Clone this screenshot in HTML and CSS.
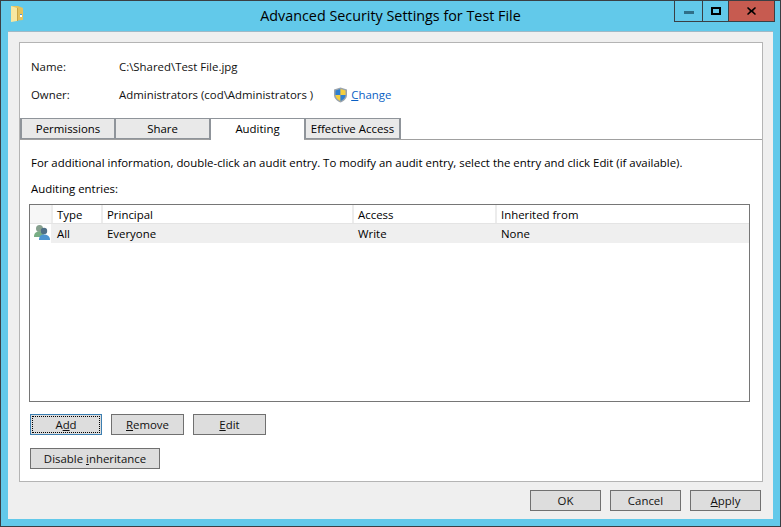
FILE: index.html
```html
<!DOCTYPE html>
<html lang="en">
<head>
<meta charset="utf-8">
<title>Advanced Security Settings for Test File</title>
<link rel="stylesheet" href="styles.css">
</head>
<body>
<div class="window">
  <header class="titlebar">
    <svg class="folder" width="14" height="18" viewBox="0 0 14 18"><path d="M1 1h7l5 2v12l-12 1z" fill="#e6c35c"/><path d="M1 1l6 2v13l-6 1z" fill="#f7e7a0"/><path d="M7 3h1v13H7z" fill="#c9a544"/><path d="M8 4h4v11H8z" fill="#e3c25e"/><rect x="10" y="9" width="2" height="1" fill="#4d9ad6"/><rect x="10" y="10" width="2" height="2" fill="#fff"/></svg>
    <h1 class="title">Advanced Security Settings for Test File</h1>
    <div class="controls">
      <div class="ctl ctl-min"><span class="min-bar"></span></div>
      <div class="ctl ctl-max"><span class="max-box"></span></div>
      <div class="ctl ctl-close"><svg width="9" height="8" viewBox="0 0 9 8"><path d="M1 0l3.500 3L8 0l1 1-3 3 3 3-1 1-3.500-3L1 8 0 7l3-3-3-3z" fill="#000"/></svg></div>
    </div>
  </header>
  <div class="client">
    <main class="panel">
      <div class="info">
        <div class="info-row"><span class="info-label">Name:</span><span>C:\Shared\Test File.jpg</span></div>
        <div class="info-row"><span class="info-label">Owner:</span><span>Administrators (cod\Administrators )</span>
          <svg class="shield" width="15" height="16" viewBox="0 0 15 16"><path d="M7.500 0.500L14 2.500V8c0 3.500-3 6-6.500 7.500C4 14 1 11.500 1 8V2.500z" fill="#9aa3ab"/><path d="M7.500 2L7.500 8H2.500V3.500z" fill="#2f7fd0"/><path d="M7.500 2L12.500 3.500V8H7.500z" fill="#f5cf3e"/><path d="M2.500 8H7.500V14C5 13 2.500 11 2.500 8z" fill="#f5cf3e"/><path d="M7.500 8H12.500C12.500 11 10 13 7.500 14z" fill="#2f7fd0"/></svg>
          <a class="link" href="#"><u>C</u>hange</a>
        </div>
      </div>
      <nav class="tabs">
        <div class="tab">Permissions</div>
        <div class="tab">Share</div>
        <div class="tab tab-active">Auditing</div>
        <div class="tab tab-last">Effective Access</div>
      </nav>
      <section class="content">
        <p class="hint">For additional information, double-click an audit entry. To modify an audit entry, select the entry and click Edit (if available).</p>
        <p class="entries-label">Auditing entries:</p>
        <div class="list">
          <div class="row list-head">
            <div class="c c-icon"></div>
            <div class="c c-type">Type</div>
            <div class="c c-principal">Principal</div>
            <div class="c c-access">Access</div>
            <div class="c c-inherit">Inherited from</div>
          </div>
          <div class="row list-item">
            <div class="c c-icon">
              <svg width="18" height="17" viewBox="0 0 18 17"><circle cx="6.500" cy="4.500" r="3.500" fill="#86a08e"/><path d="M1 13c0-4 2-5.500 5.500-5.500S11 9 11 13z" fill="#78ad84"/><circle cx="11" cy="7" r="3.200" fill="#4f6f86"/><path d="M6 16c0-4 2-5.500 5-5.500s6 1.500 6 5.500z" fill="#4d94cf"/></svg>
            </div>
            <div class="c c-type">All</div>
            <div class="c c-principal">Everyone</div>
            <div class="c c-access">Write</div>
            <div class="c c-inherit">None</div>
          </div>
        </div>
        <div class="actions">
          <button class="btn btn-focus" type="button"><span class="focus-ring">A<u>d</u>d</span></button>
          <button class="btn" type="button"><u>R</u>emove</button>
          <button class="btn" type="button"><u>E</u>dit</button>
        </div>
        <button class="btn btn-wide" type="button">Disable <u>i</u>nheritance</button>
      </section>
    </main>
    <footer class="footer">
      <button class="btn btn-foot" type="button">OK</button>
      <button class="btn btn-foot" type="button">Cancel</button>
      <button class="btn btn-foot" type="button"><u>A</u>pply</button>
    </footer>
  </div>
</div>
</body>
</html>
```
FILE: styles.css
```css
* { box-sizing: border-box; }
html, body { margin: 0; padding: 0; }
body {
  width: 781px;
  height: 527px;
  overflow: hidden;
  font-family: "Open Sans", "Noto Sans", sans-serif;
  font-size: 11.42px;
  color: #000;
}
.window {
  width: 781px;
  height: 527px;
  background: #62c9ea;
  border: 1px solid #3a3f44;
  display: flex;
  flex-direction: column;
}
.titlebar {
  height: 29px;
  flex: none;
  display: flex;
  align-items: flex-start;
  position: relative;
}
.folder { margin: 4px 0 0 9px; }
.title {
  position: absolute;
  left: 0;
  right: 0;
  top: 5px;
  margin: 0;
  text-align: center;
  font-size: 14.35px;
  font-weight: 400;
  line-height: 20px;
  color: #000;
}
.controls {
  margin-left: auto;
  margin-right: 5px;
  display: flex;
  height: 21px;
  position: relative;
  z-index: 1;
  border: 1px solid #3a3f44;
  border-top: 0;
}
.ctl { display: flex; align-items: center; justify-content: center; }
.ctl-min { width: 28px; border-right: 1px solid #3a3f44; }
.ctl-max { width: 26px; border-right: 1px solid #3a3f44; }
.ctl-close { width: 45px; background: #c75b50; }
.min-bar { width: 10px; height: 3px; background: #2f6f88; margin-top: 2px; }
.max-box { width: 10px; height: 8px; border: 2px solid #000; }
.client {
  margin: 1px 7px 7px 7px;
  flex: 1;
  background: #efefef;
  border-top: 1px solid #9fb9c6;
  padding: 10px 10px 0 11px;
  display: flex;
  flex-direction: column;
}
.panel {
  height: 440px;
  flex: none;
  background: #fff;
  border: 1px solid #b4b4b4;
  display: flex;
  flex-direction: column;
}
.info { padding: 15px 0 0 11px; height: 75px; }
.info-row { display: flex; align-items: center; height: 17px; margin-bottom: 11px; color: #111; }
.info-label { width: 88px; flex: none; }
.shield { margin-left: 20px; }
.link { margin-left: 3px; color: #0a5fc4; text-decoration: none; }
.tabs {
  display: flex;
  height: 22px;
  border-bottom: 1px solid #a0a0a0;
  flex: none;
}
.tab {
  width: 95px;
  height: 21px;
  background: #e9e9e9;
  border: 1px solid #8f949a;
  border-left-width: 2px;
  border-right-width: 0;
  text-align: center;
  line-height: 19px;
}
.tab:first-child { width: 94px; }
.tab-active { background: #fff; height: 22px; border-bottom: 0; }
.tab-last { width: 97px; border-right-width: 2px; white-space: nowrap; }
.content { padding: 0 9px; flex: 1; }
.hint { margin: 14px 0 0 2px; line-height: 17px; white-space: nowrap; }
.entries-label { margin: 9px 0 0 2px; line-height: 17px; }
.list {
  margin-top: 7px;
  width: 721px;
  height: 198px;
  border: 1px solid #767676;
  background: #fff;
}
.row { display: flex; height: 19px; }
.list-head { border-bottom: 1px solid #e4e4e4; }
.list-head .c + .c { border-left: 2px solid #ececec; padding-left: 4px; }
.list-item { background: #efefef; }
.c { line-height: 18px; padding: 1px 0 0 6px; white-space: nowrap; }
.c-icon { width: 21px; padding: 0; background: #fff; flex: none; }
.c-icon svg { display: block; margin: 0 0 0 3px; }
.c-type { width: 50px; flex: none; }
.c-principal { width: 251px; flex: none; }
.c-access { width: 143px; flex: none; }
.c-inherit { flex: 1; }
.list-head .c-icon { background: #f7f7f7; }
.actions { display: flex; gap: 9px; margin: 12px 0 13px 1px; }
.btn {
  width: 73px;
  height: 21px;
  padding: 0;
  background: #dddddd;
  border: 1px solid #707070;
  font: inherit;
  color: #111;
  line-height: 18px;
  display: block;
}
.btn-focus { width: 72px; border-color: #3c7fb1; padding: 1px; }
.focus-ring { display: block; height: 17px; border: 1px dotted #000; line-height: 15px; }
.btn-wide { width: 130px; margin-left: 1px; }
.footer { display: flex; justify-content: flex-end; gap: 9px; padding: 8px 2px 0 0; }
.btn-foot { width: 71px; }
```
